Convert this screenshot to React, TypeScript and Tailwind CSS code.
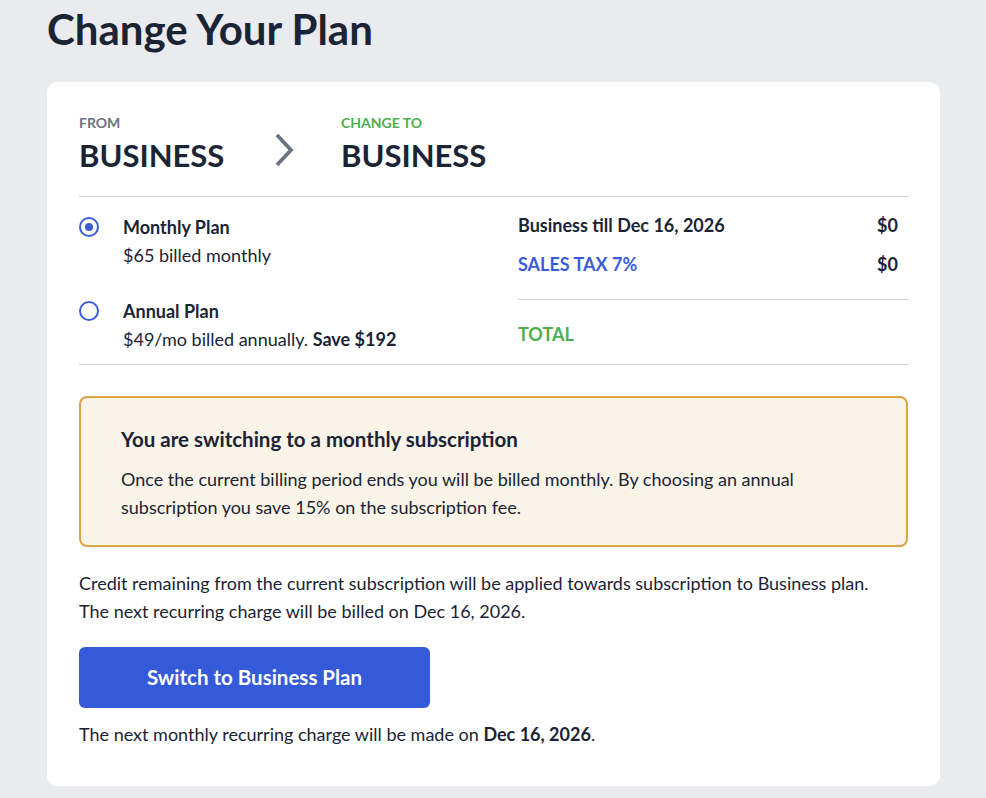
import React from "react";

export default function App() {
  return (
    <div
      className="min-h-screen bg-[#e9ebef] pl-[47px] pr-[46px] text-[#1b2434]"
      style={{ fontFamily: "Lato, 'Open Sans', sans-serif" }}
    >
      <h1 className="pt-[3px] text-[42px] font-bold leading-[52px]">Change Your Plan</h1>
      <div className="mt-[27px] rounded-[10px] bg-white px-[32px] pb-[38px] pt-[32px]">
        {/* From / to header */}
        <div className="flex items-end pb-[22px]">
          <div className="w-[190px]">
            <div className="text-[14px] font-bold leading-[18px] text-[#6b7280]">FROM</div>
            <div className="mt-[4px] text-[31px] font-bold leading-[38px]">BUSINESS</div>
          </div>
          <div className="flex w-[72px] items-center pb-[7px] pl-[5px]">
            <svg width="22" height="34" viewBox="0 0 22 34" fill="none">
              <path d="M3 2 L17 17 L3 32" stroke="#6b7280" strokeWidth="3.75" />
            </svg>
          </div>
          <div>
            <div className="text-[14px] font-bold leading-[18px] text-[#4caf50]">CHANGE TO</div>
            <div className="mt-[4px] text-[31px] font-bold leading-[38px]">BUSINESS</div>
          </div>
        </div>

        {/* Plans and totals */}
        <div className="flex border-y border-[#cbd1da] pt-[14px]">
          <div className="flex w-[439px] flex-col gap-[28px] pt-[2px]">
            <div className="flex">
              <div className="flex h-[28px] w-[44px] items-center">
                <div className="flex h-[20px] w-[20px] items-center justify-center rounded-full border-[2.5px] border-[#3b5bdb]">
                  <div className="h-[8px] w-[8px] rounded-full bg-[#3b5bdb]" />
                </div>
              </div>
              <div className="text-[18px] leading-[28px]">
                <div className="font-bold">Monthly Plan</div>
                <div>$65 billed monthly</div>
              </div>
            </div>
            <div className="flex">
              <div className="flex h-[28px] w-[44px] items-center">
                <div className="h-[20px] w-[20px] rounded-full border-[2.5px] border-[#3b5bdb]" />
              </div>
              <div className="text-[18px] leading-[28px]">
                <div className="font-bold">Annual Plan</div>
                <div>
                  $49/mo billed annually. <span className="font-bold">Save $192</span>
                </div>
              </div>
            </div>
          </div>
          <div className="flex-1">
            <div className="flex flex-col gap-[11px] pb-[21px] pr-[10px] text-[18px] leading-[28px]">
              <div className="flex justify-between font-bold">
                <span>Business till Dec 16, 2026</span>
                <span>$0</span>
              </div>
              <div className="flex justify-between font-bold">
                <span className="text-[#3b5bdb]">SALES TAX 7%</span>
                <span>$0</span>
              </div>
            </div>
            <div className="border-t border-[#cbd1da] pb-[16px] pt-[20px] text-[18px] font-bold leading-[28px] text-[#4caf50]">
              TOTAL
            </div>
          </div>
        </div>

        {/* Notice */}
        <div className="mt-[31px] rounded-[8px] border-2 border-[#dca446] bg-[#faf3e8] px-[40px] pb-[24px] pt-[27px]">
          <div className="text-[20.5px] font-bold leading-[28px]">You are switching to a monthly subscription</div>
          <div className="mt-[12px] text-[18px] leading-[28px]">
            Once the current billing period ends you will be billed monthly. By choosing an annual
            <br />
            subscription you save 15% on the subscription fee.
          </div>
        </div>

        <div className="mt-[22px] text-[18px] leading-[28px]">
          Credit remaining from the current subscription will be applied towards subscription to Business plan.
          <br />
          The next recurring charge will be billed on Dec 16, 2026.
        </div>

        <button className="mt-[22px] flex h-[61px] w-[351px] items-center justify-center rounded-[6px] bg-[#355ad9] text-[20.5px] font-bold text-white">
          Switch to Business Plan
        </button>

        <div className="mt-[12px] text-[18px] leading-[28px]">
          The next monthly recurring charge will be made on <span className="font-bold">Dec 16, 2026</span>.
        </div>
      </div>
    </div>
  );
}
